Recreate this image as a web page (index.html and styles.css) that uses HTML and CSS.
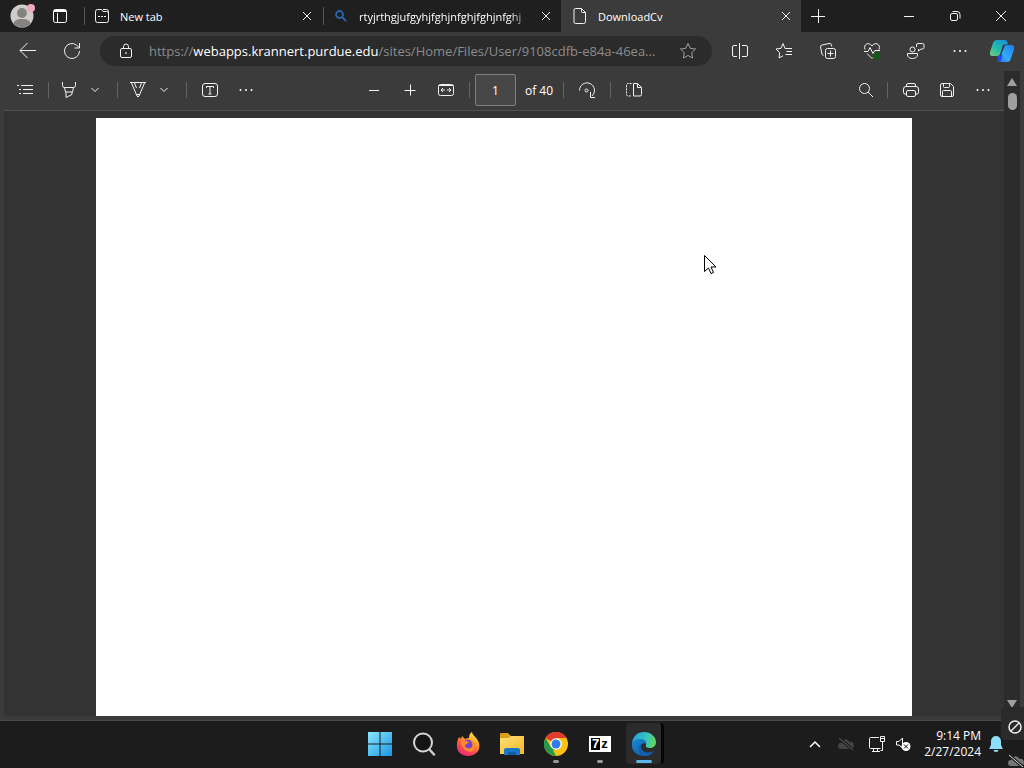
FILE: index.html
```html
<!DOCTYPE html>
<html lang="en">
<head>
  <meta charset="UTF-8" />
  <meta name="viewport" content="width=device-width, initial-scale=1.0" />
  <title>DownloadCv</title>
  <link rel="stylesheet" href="styles.css">
</head>
<body>
  <header class="tab-strip">
    <button class="profile" aria-label="Profile">
      <svg width="26" height="26" viewBox="0 0 26 26">
        <circle cx="12" cy="14" r="11.5" fill="#cfcdcc"/>
        <circle cx="12" cy="11" r="5" fill="#858381"/>
        <path d="M3.5 21.5c1-3.5 4-4.5 8.5-4.5s7.5 1 8.5 4.5A11.5 11.5 0 0 1 3.5 21.5z" fill="#858381"/>
        <circle cx="21" cy="6" r="4" fill="#f4a9b8"/>
      </svg>
    </button>
    <button class="workspaces" aria-label="Tab actions">
      <svg class="line" width="16" height="16" viewBox="0 0 16 16"><rect x="1.5" y="1.5" width="13" height="13" rx="2"/><path d="M2 3.5h12M2 2.5h12M5.5 5v9"/></svg>
    </button>

    <div class="tab">
      <svg class="line" width="16" height="16" viewBox="0 0 16 16"><path d="M3.5 1.5h4l1.5 2h3.5a2 2 0 0 1 2 2v7a2 2 0 0 1-2 2h-9a2 2 0 0 1-2-2v-9a2 2 0 0 1 2-2zM9 1.5h3.5a2 2 0 0 1 2 2v2M4 8.5h2M7 8.5h2M10 8.5h2"/></svg>
      <button class="tab-title">New tab</button>
      <button class="tab-close" aria-label="Close tab"><svg class="line" width="10" height="10" viewBox="0 0 10 10"><path d="M1 1l8 8M9 1L1 9"/></svg></button>
    </div>
    <div class="tab">
      <svg width="16" height="16" viewBox="0 0 16 16" fill="none" stroke="#2866b0" stroke-width="1.8"><circle cx="6.5" cy="6.5" r="3.5"/><path d="M9 9l4 4"/></svg>
      <button class="tab-title fade">rtyjrthgjufgyhjfghjnfghjfghjnfghj</button>
      <button class="tab-close" aria-label="Close tab"><svg class="line" width="10" height="10" viewBox="0 0 10 10"><path d="M1 1l8 8M9 1L1 9"/></svg></button>
    </div>
    <div class="tab active">
      <svg class="line" width="16" height="16" viewBox="0 0 16 16"><path d="M3.5.5h6l4 4v9a2 2 0 0 1-2 2h-8a1.5 1.5 0 0 1-1.5-1.5V2A1.5 1.5 0 0 1 3.5.5zM9.5.5v3a1 1 0 0 0 1 1h3"/></svg>
      <button class="tab-title">DownloadCv</button>
      <button class="tab-close" aria-label="Close tab"><svg class="line" width="10" height="10" viewBox="0 0 10 10"><path d="M1 1l8 8M9 1L1 9"/></svg></button>
    </div>
    <button class="new-tab" aria-label="New tab"><svg class="line" width="14" height="14" viewBox="0 0 14 14"><path d="M7.5 0v14M0 7.5h14"/></svg></button>

    <div class="window-controls">
      <button aria-label="Minimize"><svg class="line" width="10" height="10" viewBox="0 0 10 10"><path d="M0 5.5h10"/></svg></button>
      <button aria-label="Restore"><svg class="line" width="12" height="12" viewBox="0 0 12 12"><rect x="1.5" y="3.5" width="7" height="7" rx="1.5"/><path d="M3.5 1.5h4.5a3 3 0 0 1 3 3v4"/></svg></button>
      <button aria-label="Close"><svg class="line" width="12" height="12" viewBox="0 0 12 12"><path d="M1 1l10 10M11 1L1 11"/></svg></button>
    </div>
  </header>

  <nav class="address-bar">
    <button aria-label="Back"><svg class="line" width="18" height="18" viewBox="0 0 18 18"><path d="M17 8.5H1M8.5 1L1 8.500l7.500 7.500"/></svg></button>
    <button aria-label="Refresh"><svg class="line" width="18" height="18" viewBox="0 0 18 18"><path d="M16.500 9A7.500 7.500 0 1 1 13.500 3L16 5.500M16.500 1v5h-5"/></svg></button>
    <div class="url-box">
      <svg class="line" width="14" height="16" viewBox="0 0 14 16"><rect x="1.500" y="5.500" width="11" height="9" rx="1.500"/><path d="M4.500 5.500V3.500a2.500 2.500 0 0 1 5 0v2"/><circle cx="7" cy="10" r=".5"/></svg>
      <div class="url" role="textbox" contenteditable="true" spellcheck="false" aria-label="Address">https://<b>webapps.krannert.purdue.edu</b>/sites/Home/Files/User/9108cdfb-e84a-46ea...</div>
      <button aria-label="Add to favorites"><svg class="line dim" width="18" height="18" viewBox="0 0 18 18"><path d="M9 1.500l2.300 4.800 5.200.7-3.800 3.700.9 5.300L9 13.500 4.400 16l.9-5.300L1.500 7l5.200-.7z"/></svg></button>
    </div>
    <button aria-label="Split screen"><svg class="line" width="18" height="18" viewBox="0 0 18 18"><path d="M6 3.500H3A1.500 1.500 0 0 0 1.500 5v8A1.500 1.500 0 0 0 3 14.500h3M11 3.500h4A1.500 1.500 0 0 1 16.500 5v8a1.500 1.500 0 0 1-1.500 1.500h-4M8.500 1v16"/></svg></button>
    <button aria-label="Favorites"><svg class="line" width="18" height="18" viewBox="0 0 18 18"><path d="M11 6.500H10L8 1.500 6 6.300l-5 .7 3.700 3.700L4 16l4-2.300M11 6.500h6M11.500 9.500H17M10.500 12.500H17"/></svg></button>
    <button aria-label="Collections"><svg class="line" width="18" height="18" viewBox="0 0 18 18"><rect x="6.500" y="6.500" width="10" height="10" rx="2"/><path d="M11.500 8.500v6M8.500 11.500h6M4.500 13.500A2 2 0 0 1 3 12L1.500 5A2 2 0 0 1 3 3l7-1.500a2 2 0 0 1 2.500 1.500l.3 1.500"/></svg></button>
    <button aria-label="Browser essentials"><svg class="line" width="18" height="18" viewBox="0 0 18 18"><circle cx="13.500" cy="13.500" r="4" fill="#17561c" stroke="none"/><path d="M2 7.500C0 2 6-.5 9 4c3-4.500 9-2 7 3.500M1 9.500h4l2-4 3 6 2-3h5M4 11.500l5 5 1-1"/></svg></button>
    <button aria-label="Feedback"><svg class="line" width="18" height="18" viewBox="0 0 18 18"><circle cx="5.500" cy="7.500" r="2.500"/><path d="M.5 11.500h10v1.500c0 2-2 3.500-5 3.500s-5-1.500-5-3.500zM9.500 5V3A1.500 1.500 0 0 1 11 1.500h4.500A1.500 1.500 0 0 1 17 3v2.500A1.500 1.500 0 0 1 15.500 7H14l-2.500 2V7"/></svg></button>
    <button aria-label="Settings and more"><svg width="14" height="4" viewBox="0 0 14 4" fill="#fff"><circle cx="1.500" cy="2" r="1"/><circle cx="7" cy="2" r="1"/><circle cx="12.500" cy="2" r="1"/></svg></button>
    <button class="copilot" aria-label="Copilot">
      <svg width="26" height="24" viewBox="0 0 26 24">
        <defs>
          <linearGradient id="copilotLeft" x1="0" y1="1" x2="1" y2="0"><stop offset="0" stop-color="#78cf77"/><stop offset=".45" stop-color="#20b9b2"/><stop offset="1" stop-color="#168bd8"/></linearGradient>
          <linearGradient id="copilotRight" x1="1" y1="0" x2="0" y2="1"><stop offset="0" stop-color="#1b7cec"/><stop offset=".6" stop-color="#31aefa"/><stop offset="1" stop-color="#2867ee"/></linearGradient>
        </defs>
        <path d="M8 1h8c2 0 2.500 2 3 4l-5 1-3 9c-.6 2-2 2-4 2H4c-3 0-3.500-2-3-4L4 4c.8-2 2-3 4-3z" fill="url(#copilotLeft)"/>
        <path d="M18 6h4c3 0 3.500 2 3 5l-3 8c-.8 3-2 4-4 4h-7c-2 0-2-2-2.500-5 3 0 3.500-1 4-3l3-7c.5-1.500 1-2 2.500-2z" fill="url(#copilotRight)"/>
        <path d="M8 17c3 .5 4-1 4.500-3l1 3-2 5.500C9 22.500 9 20 8 17z" fill="#2448e5"/>
      </svg>
    </button>
  </nav>

  <div class="content">
    <div class="pdf">
      <div class="pdf-toolbar">
        <div class="group">
          <button aria-label="Contents"><svg class="line" width="18" height="14" viewBox="0 0 18 14"><path d="M1 2.500h2M5 2.500h12M3 6.500h2M7 6.500h10M3 10.500h2M7 10.500h10"/></svg></button>
          <span class="divider"></span>
          <button class="tool" aria-label="Highlight"><svg class="line" width="16" height="18" viewBox="0 0 16 18"><path d="M1.500 1v3.500a2 2 0 0 0 2 2h9a2 2 0 0 0 2-2V1M3.500 6.500L4.500 11h7l1-4.500M5 11v5.500l6-3V11"/></svg></button>
          <button class="more" aria-label="Highlight colors"><svg class="line" width="8" height="6" viewBox="0 0 8 6"><path d="M.5 1L4 4.500 7.500 1"/></svg></button>
          <span class="divider"></span>
          <button class="tool" aria-label="Draw"><svg class="line" width="16" height="18" viewBox="0 0 16 18"><path d="M0 1.500h16M1.500 2L7 15q1 2 2 0l5.500-13M4.500 2l2 5M11.500 2l-2 5M6.500 13.500h3"/></svg></button>
          <button class="more" aria-label="Pen options"><svg class="line" width="8" height="6" viewBox="0 0 8 6"><path d="M.5 1L4 4.500 7.500 1"/></svg></button>
          <span class="divider"></span>
          <button aria-label="Add text"><svg class="line" width="18" height="16" viewBox="0 0 18 16"><rect x="1.500" y="1.500" width="15" height="13" rx="2.500"/><path d="M5.500 6V4.500h7V6M9 4.500v7.500M7.500 12h3"/></svg></button>
          <button aria-label="More tools"><svg width="14" height="4" viewBox="0 0 14 4" fill="#fff"><circle cx="1.500" cy="2" r="1"/><circle cx="7" cy="2" r="1"/><circle cx="12.500" cy="2" r="1"/></svg></button>
        </div>

        <div class="group">
          <button aria-label="Zoom out"><svg class="line" width="12" height="12" viewBox="0 0 12 12"><path d="M1 6.500h10"/></svg></button>
          <button aria-label="Zoom in"><svg class="line" width="12" height="12" viewBox="0 0 12 12"><path d="M.5 6.500h11M6.500.500v11"/></svg></button>
          <button aria-label="Fit to width"><svg class="line" width="18" height="14" viewBox="0 0 18 14"><rect x="1.500" y="1.500" width="15" height="11" rx="2"/><path d="M1.500 2.500h15M8 7H4M6 5L4 7l2 2M10 7h4M12 5l2 2-2 2"/></svg></button>
          <span class="divider"></span>
          <input class="page-number" type="text" value="1" aria-label="Page number">
          <span class="page-count">of 40</span>
          <span class="divider"></span>
          <button aria-label="Rotate"><svg class="line" width="18" height="18" viewBox="0 0 18 18"><path d="M1.500 9.500a7.500 7.500 0 1 1 12.500 5.500M12.500 11v5.500H17"/><circle cx="8.500" cy="9.500" r="1.500"/></svg></button>
          <span class="divider"></span>
          <button aria-label="Page view"><svg class="line" width="18" height="16" viewBox="0 0 18 16"><path d="M8.500 1.500h4l4 4v7a1.500 1.500 0 0 1-1.500 1.500H8.500zM12.500 1.500v4h4"/><path d="M6.500 1.500H3A1.500 1.500 0 0 0 1.500 3v9.500A1.500 1.500 0 0 0 3 14h3.500" stroke-dasharray="2 1"/></svg></button>
        </div>

        <div class="group right">
          <button class="find" aria-label="Find"><svg class="line" width="16" height="16" viewBox="0 0 16 16"><circle cx="6.500" cy="6.500" r="5"/><path d="M10 10l5 5"/></svg></button>
          <span class="divider"></span>
          <button aria-label="Print"><svg class="line" width="18" height="16" viewBox="0 0 18 16"><path d="M4.500 4V3A1.500 1.500 0 0 1 6 1.500h6A1.500 1.500 0 0 1 13.500 3v1M4.500 12H3a1.500 1.500 0 0 1-1.500-1.500V7a2.500 2.500 0 0 1 2.500-2.500h10A2.500 2.500 0 0 1 16.500 7v3.500A1.500 1.500 0 0 1 15 12h-1.500"/><rect x="4.500" y="8.500" width="9" height="6" rx="1.500"/></svg></button>
          <button aria-label="Save"><svg class="line" width="16" height="16" viewBox="0 0 16 16"><path d="M3 1.500h8.500l3 3V13a1.500 1.500 0 0 1-1.500 1.500H3A1.500 1.500 0 0 1 1.500 13V3A1.500 1.500 0 0 1 3 1.500zM4.500 1.500v3a1 1 0 0 0 1 1h4a1 1 0 0 0 1-1v-3M3.500 14.500v-5a1 1 0 0 1 1-1h7a1 1 0 0 1 1 1v5"/></svg></button>
          <button aria-label="More actions"><svg width="14" height="4" viewBox="0 0 14 4" fill="#fff"><circle cx="1.500" cy="2" r="1"/><circle cx="7" cy="2" r="1"/><circle cx="12.500" cy="2" r="1"/></svg></button>
        </div>
      </div>

      <main class="viewer">
        <div class="page"></div>
      </main>
    </div>

    <div class="scrollbar">
      <span class="arrow-up"></span>
      <span class="thumb"></span>
      <span class="arrow-down"></span>
    </div>
  </div>

  <footer class="taskbar">
    <div class="apps">
      <button aria-label="Start">
        <svg width="24" height="24" viewBox="0 0 24 24">
          <defs><linearGradient id="win" x1="0" y1="0" x2="1" y2="1"><stop offset="0" stop-color="#8be6fb"/><stop offset="1" stop-color="#1897e6"/></linearGradient></defs>
          <path d="M0 0h11.500v11.500H0zM12.500 0H24v11.500H12.500zM0 12.500h11.500V24H0zM12.500 12.500H24V24H12.500z" fill="url(#win)"/>
        </svg>
      </button>
      <button aria-label="Search">
        <svg width="24" height="24" viewBox="0 0 24 24"><path d="M17 17l5 5.500" stroke="#cfcfcf" stroke-width="2.500" stroke-linecap="round"/><circle cx="11" cy="10.500" r="9" fill="#141414" stroke="#d6d6d6" stroke-width="2"/></svg>
      </button>
      <button aria-label="Firefox">
        <svg width="24" height="26" viewBox="0 0 24 26">
          <defs><linearGradient id="fox" x1=".8" y1="0" x2=".3" y2="1"><stop offset="0" stop-color="#fff04a"/><stop offset=".35" stop-color="#ffa42b"/><stop offset=".7" stop-color="#ff4a4e"/><stop offset="1" stop-color="#e32a78"/></linearGradient></defs>
          <path d="M3 6l2 2 1-3 3 3c2-1 3-1 4-1 0-3 1-5 3-6 0 3 5 5 7 11 2 8-4 13-11 13S0 20 1 13c0-3 1-5 2-7z" fill="url(#fox)"/>
          <circle cx="12" cy="14" r="5.500" fill="#7a41c9"/>
          <path d="M5 11c3-2 5-1 8 0-1 2-4 2-4 4 1 3 5 3 7 1 1-2 0-5-2-7 5 1 7 6 4 10-4 4-12 1-13-8z" fill="#ff8a2c"/>
        </svg>
      </button>
      <button aria-label="File Explorer">
        <svg width="24" height="22" viewBox="0 0 24 22">
          <defs><linearGradient id="folder" x1="0" y1="0" x2="1" y2="1"><stop offset="0" stop-color="#ffe07a"/><stop offset="1" stop-color="#f3b922"/></linearGradient></defs>
          <path d="M0 1q0-1 1-1h7l3 3h12q1 0 1 1v6H0z" fill="#dc9d18"/>
          <path d="M0 5h8l3-2h12q1 0 1 1v17H0z" fill="url(#folder)"/>
          <path d="M4 22v-5q0-2 2-2h12q2 0 2 2v5z" fill="#1878c8"/>
          <path d="M8 19h8v3H8z" fill="#125ea6"/>
        </svg>
      </button>
      <button class="running" aria-label="Chrome">
        <svg width="24" height="24" viewBox="0 0 24 24">
          <circle cx="12" cy="12" r="12" fill="#fbc116"/>
          <path d="M12 12L1.600 6A12 12 0 0 1 22.400 6H12z" fill="#e33b2e"/>
          <path d="M1.600 6L6.800 15 12 18l.2 6A12 12 0 0 1 1.600 6z" fill="#229a4c"/>
          <path d="M17.200 15L12 24l-3-6z" fill="#fbc116"/>
          <circle cx="12" cy="12" r="5.800" fill="#fff"/>
          <circle cx="12" cy="12" r="4.500" fill="#2f7be9"/>
        </svg>
      </button>
      <button class="running" aria-label="7-Zip"><span class="sevenzip"><span>7</span><span>z</span></span></button>
      <button class="running current" aria-label="Edge">
        <svg width="26" height="26" viewBox="0 0 26 26">
          <defs>
            <linearGradient id="edgeTop" x1="0" y1=".3" x2="1" y2=".5"><stop offset="0" stop-color="#229fe0"/><stop offset=".6" stop-color="#37c5c0"/><stop offset="1" stop-color="#61d75b"/></linearGradient>
            <linearGradient id="edgeLow" x1="0" y1="0" x2="1" y2="1"><stop offset="0" stop-color="#1a8cd6"/><stop offset="1" stop-color="#0c4d98"/></linearGradient>
          </defs>
          <path d="M1 12C2 4 8 1 13 1c7 0 12 5 12 10 0 4-3 6-6 6-3 0-5-1-4-3 1-3-2-5-5-5-4 0-7 1-9 3z" fill="url(#edgeTop)"/>
          <path d="M1 12c2-3 5-4 8-4 4 0 7 2 6 5-2-2-6 0-5 4 1 5 7 6 12 3-2 3-5 5-9 5C5 25 0 19 1 12z" fill="url(#edgeLow)"/>
          <path d="M10 13c-4 4-2 10 4 12 4 0 7-2 9-5-5 3-11 2-13-3z" fill="#125fae"/>
        </svg>
      </button>
    </div>

    <div class="tray">
      <button aria-label="Show hidden icons"><svg width="12" height="8" viewBox="0 0 12 8" fill="none" stroke="#fff" stroke-width="1.500"><path d="M1 7l5-5 5 5"/></svg></button>
      <button class="onedrive" aria-label="OneDrive"><svg width="16" height="14" viewBox="0 0 16 14"><path d="M3 12a3 3 0 0 1 0-6 4.500 4.500 0 0 1 8.500-1A3.500 3.500 0 0 1 13 12z" fill="#444"/><path d="M1 1l14 12" stroke="#1c1c1c" stroke-width="3"/><path d="M1 1l14 12" stroke="#626262"/></svg></button>
      <button aria-label="Network"><svg class="line" width="18" height="18" viewBox="0 0 18 18"><path d="M11 2.500H2.500a1 1 0 0 0-1 1v9a1 1 0 0 0 1 1h10M4 16.500h8M5.500 13.500v3M9.500 13.500v3"/><path d="M12.500 1.500h4v5h-4zM12.500 3.500h4M14.500 6.500v9h-2"/></svg></button>
      <button class="volume" aria-label="Volume muted"><svg width="16" height="16" viewBox="0 0 16 16"><path d="M1.500 5.500H4L7.500 2v10L4 9H1.500z" fill="none" stroke="#fff"/><circle cx="11" cy="10.500" r="4.500" fill="#fff"/><path d="M9 8.500l4 4M13 8.500l-4 4" stroke="#111"/></svg></button>
      <time class="clock" datetime="2024-02-27T21:14"><span>9:14 PM</span><span>2/27/2024</span></time>
      <button class="bell" aria-label="Notifications"><svg width="14" height="16" viewBox="0 0 14 16" fill="#8ddff8"><path d="M7 0a5 5 0 0 1 5 5v4l1.500 3c.3.600 0 1-.5 1H1c-.5 0-.8-.400-.5-1L2 9V5a5 5 0 0 1 5-5zM4.500 14h5a2.500 2 0 0 1-5 0z"/></svg></button>
    </div>
  </footer>

  <div class="status-overlay">
    <span><svg width="14" height="14" viewBox="0 0 14 14" fill="none" stroke="#eee" stroke-width="1.500"><circle cx="7" cy="7" r="6"/><path d="M3 11l8-8"/></svg></span>
    <svg width="16" height="14" viewBox="0 0 16 14"><path d="M3 12a3 3 0 0 1 0-6 4.500 4.500 0 0 1 8.500-1A3.500 3.500 0 0 1 13 12z" fill="#777"/><path d="M1 1l14 12" stroke="#1c1c1c" stroke-width="3"/><path d="M1 1l14 12" stroke="#ddd"/></svg>
  </div>

  <svg class="pointer" width="13" height="20" viewBox="0 0 13 20"><path d="M.5.5v16l4-3.500 2.500 5.500 2.500-1-2.500-5.500h5z" fill="#fff" stroke="#000"/></svg>
</body>
</html>
```
FILE: styles.css
```css
* {
  box-sizing: border-box;
}

body {
  font-family: "Open Sans", "Noto Sans", sans-serif;
  font-size: 12px;
  background-color: #3b3b3b;
  color: #fff;
  margin: 0;
  height: 100vh;
  display: flex;
  flex-direction: column;
  position: relative;
  overflow: hidden;
}

button {
  display: flex;
  align-items: center;
  justify-content: center;
  flex: none;
  padding: 0;
  border: none;
  background: none;
  color: inherit;
  font: inherit;
}

svg {
  display: block;
  flex: none;
}

.line {
  fill: none;
  stroke: #f2f2f2;
  stroke-width: 1;
}

.dim {
  stroke: #a0a0a0;
}

/* tabs */
.tab-strip {
  display: flex;
  height: 32px;
  flex: none;
  background-color: #1f1f1f;
}

.profile {
  width: 46px;
  padding-bottom: 2px;
}

.workspaces {
  width: 28px;
  margin-right: 9px;
}

.workspaces .line {
  stroke: #fff;
}

.tab {
  display: flex;
  align-items: center;
  flex: 0 1 239px;
  min-width: 0;
  gap: 10px;
  padding: 0 10px;
  border-left: 1px solid transparent;
  background: linear-gradient(#555, #555) left center / 1px 18px no-repeat;
}

.tab.active {
  background: #3b3b3b;
  flex-basis: 240px;
}

.tab-title {
  flex: 1;
  min-width: 0;
  justify-content: flex-start;
  font-size: 11px;
  white-space: nowrap;
}

.fade {
  mask-image: linear-gradient(to right, #000 88%, transparent);
}

.new-tab {
  width: 34px;
}

.window-controls {
  display: flex;
  margin-left: auto;
}

.window-controls button {
  width: 46px;
}

/* address bar */
.address-bar {
  display: flex;
  align-items: center;
  height: 38px;
  flex: none;
  padding: 0 2px 0 6px;
}

.address-bar button {
  width: 44px;
  height: 32px;
}

.address-bar .copilot {
  width: 40px;
}

.url-box {
  display: flex;
  align-items: center;
  flex: 1;
  min-width: 0;
  height: 30px;
  margin: 0 6px;
  padding-left: 19px;
  border-radius: 15px;
  background-color: #2b2b2b;
}

.url {
  flex: 1;
  min-width: 0;
  margin-left: 16px;
  font-size: 13px;
  line-height: 20px;
  color: #8c8c8c;
  white-space: nowrap;
  overflow: hidden;
  outline: none;
}

.url b {
  font-weight: normal;
  color: #fff;
}

.url-box button {
  width: 48px;
}

/* pdf viewer */
.content {
  display: flex;
  flex: 1;
  min-height: 0;
  padding: 0 4px 4px;
}

.pdf {
  display: flex;
  flex-direction: column;
  flex: 1;
  min-width: 0;
}

.pdf-toolbar {
  display: grid;
  grid-template-columns: 1fr auto 1fr;
  align-items: center;
  height: 41px;
  flex: none;
  padding: 0 3px;
  border-bottom: 1px solid #505050;
}

.group {
  display: flex;
  align-items: center;
}

.group.right {
  justify-content: flex-end;
}

.group button {
  width: 36px;
  height: 32px;
}

.group .tool {
  width: 30px;
}

.group .more {
  width: 22px;
  margin-right: 6px;
}

.group .find {
  width: 32px;
}

.divider {
  width: 1px;
  height: 16px;
  margin: 0 5px;
  background-color: #636363;
}

.page-number {
  width: 41px;
  height: 32px;
  padding: 0;
  border: 1px solid #808080;
  border-radius: 2px;
  background-color: #474747;
  color: #fff;
  font: inherit;
  text-align: center;
}

.page-count {
  width: 42px;
  padding-left: 4px;
  text-align: center;
}

.viewer {
  flex: 1;
  min-height: 0;
  padding-top: 7px;
  background-color: #333;
}

.page {
  width: 816px;
  max-width: 100%;
  height: 100%;
  margin: 0 auto;
  background-color: #fff;
}

.scrollbar {
  display: flex;
  flex-direction: column;
  align-items: center;
  width: 16px;
  margin-top: 1px;
  padding: 7px 0 8px;
  background-color: #2c2c2c;
}

.arrow-up,
.arrow-down {
  width: 10px;
  height: 8px;
  background-color: #9f9f9f;
  clip-path: polygon(50% 0, 100% 100%, 0 100%);
}

.arrow-down {
  margin-top: auto;
  clip-path: polygon(0 0, 100% 0, 50% 100%);
}

.thumb {
  width: 9px;
  height: 17px;
  margin-top: 7px;
  border-radius: 5px;
  background-color: #9f9f9f;
}

/* taskbar */
.taskbar {
  display: grid;
  grid-template-columns: 1fr auto 1fr;
  height: 48px;
  flex: none;
  padding-bottom: 2px;
  background-color: #1c1c1c;
  border-top: 1px solid #484848;
}

.apps {
  display: flex;
  grid-column: 2;
}

.apps button {
  width: 44px;
  position: relative;
}

.running::after {
  content: "";
  position: absolute;
  bottom: 3px;
  width: 6px;
  height: 3px;
  border-radius: 2px;
  background-color: #999;
}

.apps .current {
  width: 38px;
  margin: 2px 2px 2px 4px;
  border-radius: 4px;
  background-color: #2b2b2b;
  border-right: 3px solid #050505;
}

.current::after {
  width: 16px;
  bottom: 1px;
  background-color: #5bb5ec;
}

.sevenzip {
  display: flex;
  width: 22px;
  height: 16px;
  padding: 2px;
  background-color: #fff;
  font-family: "Liberation Sans", Arial, sans-serif;
  font-size: 13px;
  font-weight: bold;
  line-height: 12px;
  color: #000;
}

.sevenzip span {
  flex: 1;
}

.sevenzip span:first-child {
  background-color: #000;
  color: #fff;
}

.tray {
  display: flex;
  align-items: center;
  justify-content: flex-end;
  padding-right: 20px;
}

.tray button {
  width: 28px;
  height: 40px;
}

.tray .onedrive {
  width: 34px;
}

.tray .volume {
  width: 24px;
}

.clock {
  display: flex;
  flex-direction: column;
  align-items: flex-end;
  width: 66px;
  font-size: 12px;
  line-height: 16px;
}

.tray .bell {
  width: 16px;
  margin-left: 7px;
}

/* things floating above the desktop */
.status-overlay {
  position: absolute;
  right: 0;
  bottom: 0;
  width: 23px;
  display: flex;
  flex-direction: column;
  align-items: flex-end;
  gap: 14px;
}

.status-overlay span {
  display: flex;
  align-items: center;
  justify-content: flex-end;
  width: 100%;
  height: 33px;
  padding: 6px 2px 0 0;
  border-radius: 4px 0 0 4px;
  background-color: #2a2a2a;
}

.pointer {
  position: absolute;
  left: 704px;
  top: 255px;
}
```
